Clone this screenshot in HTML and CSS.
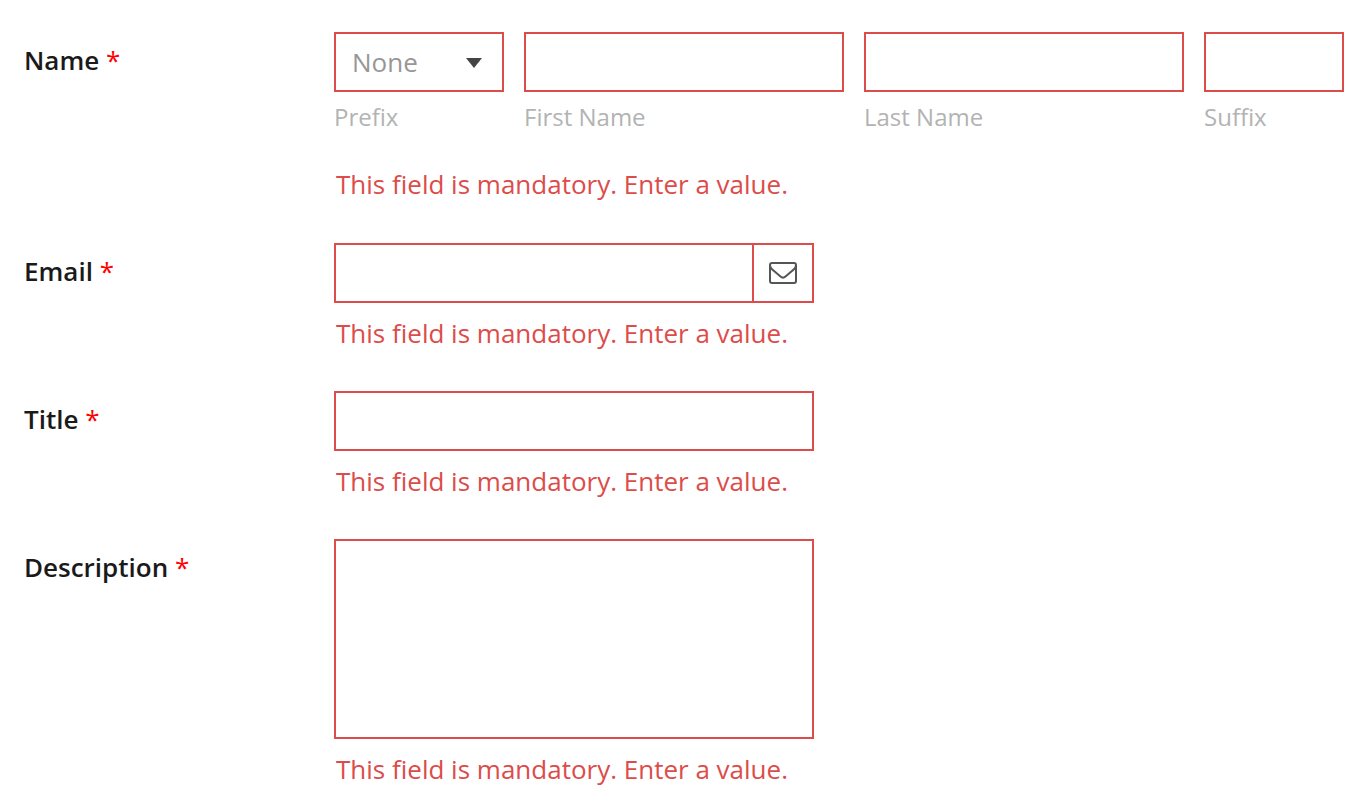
FILE: index.html
```html
<!DOCTYPE html>
<html lang="en">
<head>
<meta charset="utf-8">
<title>Contact form</title>
<link rel="stylesheet" href="styles.css">
</head>
<body>
<form class="form" novalidate>
  <div class="row" role="group" aria-labelledby="name-label">
    <div class="label" id="name-label">Name <span class="required">*</span></div>
    <div class="field field-wide">
      <div class="name-parts">
        <div class="part part-prefix">
          <div class="select-wrap">
            <select class="control select" id="prefix"><option>None</option></select>
            <svg class="caret" viewBox="0 0 16 10" aria-hidden="true"><path d="M0 0H16L8 10Z"/></svg>
          </div>
          <label class="hint" for="prefix">Prefix</label>
        </div>
        <div class="part part-name">
          <input class="control" id="first" type="text">
          <label class="hint" for="first">First Name</label>
        </div>
        <div class="part part-name">
          <input class="control" id="last" type="text">
          <label class="hint" for="last">Last Name</label>
        </div>
        <div class="part part-suffix">
          <input class="control" id="suffix" type="text">
          <label class="hint" for="suffix">Suffix</label>
        </div>
      </div>
      <p class="error error-group">This field is mandatory. Enter a value.</p>
    </div>
  </div>
  <div class="row">
    <label class="label" for="email">Email <span class="required">*</span></label>
    <div class="field">
      <div class="control email">
        <input class="email-input" id="email" type="email">
        <span class="addon">
          <svg class="mail" viewBox="0 0 30 24" aria-hidden="true"><rect x="2" y="2" width="26" height="20" rx="2"/><path d="M2 4.500C2 6.500 3.500 8 5.500 9.600L12.500 15.600Q15 17.800 17.500 15.600L24.500 9.600C26.500 8 28 6.500 28 4.500"/></svg>
        </span>
      </div>
      <p class="error">This field is mandatory. Enter a value.</p>
    </div>
  </div>
  <div class="row">
    <label class="label" for="title">Title <span class="required">*</span></label>
    <div class="field">
      <input class="control" id="title" type="text">
      <p class="error">This field is mandatory. Enter a value.</p>
    </div>
  </div>
  <div class="row">
    <label class="label" for="description">Description <span class="required">*</span></label>
    <div class="field">
      <textarea class="control textarea" id="description"></textarea>
      <p class="error">This field is mandatory. Enter a value.</p>
    </div>
  </div>
</form>
</body>
</html>
```
FILE: styles.css
```css
* { box-sizing: border-box; }
body {
  margin: 0;
  background: #fff;
  color: #1a1a1a;
  font: 26px/36px "Open Sans", "Noto Sans", sans-serif;
}
.form {
  display: flex;
  flex-direction: column;
  gap: 40px;
  padding: 32px 18px 16px 24px;
}
.row { display: flex; }
.label {
  flex: 0 0 310px;
  padding-top: 10px;
  font-weight: 600;
}
.required { color: #f00; font-weight: 500; }
.field { flex: 0 1 480px; min-width: 0; }
.field-wide { flex: 1 1 0; }
.name-parts { display: flex; gap: 20px; }
.part { display: flex; flex-direction: column; min-width: 0; }
.part-prefix { flex: 17 1 0; }
.part-name { flex: 32 1 0; }
.part-suffix { flex: 14 1 0; }
.control {
  display: block;
  width: 100%;
  height: 60px;
  margin: 0;
  padding: 0 16px;
  border: 2px solid #dc4c4a;
  border-radius: 0;
  background: #fff;
  color: #1a1a1a;
  font: inherit;
}
.select-wrap { display: grid; align-items: center; }
.select {
  grid-area: 1 / 1;
  appearance: none;
  color: #979797;
}
.caret {
  grid-area: 1 / 1;
  justify-self: end;
  width: 16px;
  height: 10px;
  margin-top: 2px;
  margin-right: 22px;
  fill: #444;
  pointer-events: none;
}
.hint {
  padding-top: 9px;
  color: #b3b3b3;
  font-size: 24px;
  line-height: 32px;
}
.error {
  margin: 0;
  padding: 12px 2px 0;
  color: #dc4c4a;
}
.error-group { padding: 33px 2px 1px; }
.email { display: flex; padding: 0; }
.email-input {
  flex: 1;
  min-width: 0;
  padding: 0 16px;
  border: 0;
  background: none;
  font: inherit;
}
.addon {
  display: flex;
  flex: 0 0 60px;
  align-items: center;
  justify-content: center;
  border-left: 2px solid #dc4c4a;
}
.mail {
  width: 30px;
  height: 24px;
  fill: none;
  stroke: #555;
  stroke-width: 2;
}
.textarea { height: 200px; padding: 12px 16px; resize: none; }
```
